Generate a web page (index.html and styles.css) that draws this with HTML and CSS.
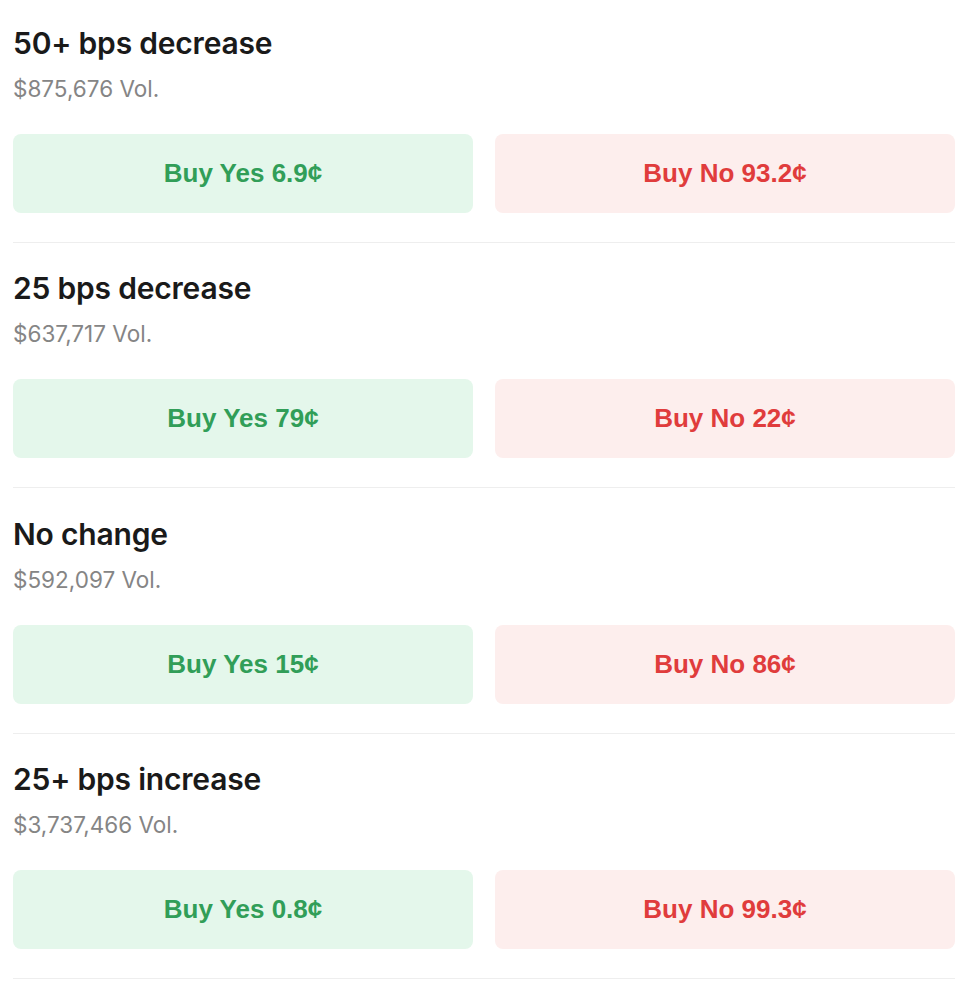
FILE: index.html
```html
<!DOCTYPE html>
<html>
<head>
<meta charset="utf-8">
<link rel="stylesheet" href="styles.css">
</head>
<body>
<div class="list">
  <div class="market">
    <div class="title">50+ bps decrease</div>
    <div class="vol">$875,676 Vol.</div>
    <div class="actions">
      <button class="btn yes">Buy Yes 6.9¢</button>
      <button class="btn no">Buy No 93.2¢</button>
    </div>
  </div>
  <div class="market">
    <div class="title">25 bps decrease</div>
    <div class="vol">$637,717 Vol.</div>
    <div class="actions">
      <button class="btn yes">Buy Yes 79¢</button>
      <button class="btn no">Buy No 22¢</button>
    </div>
  </div>
  <div class="market">
    <div class="title">No change</div>
    <div class="vol">$592,097 Vol.</div>
    <div class="actions">
      <button class="btn yes">Buy Yes 15¢</button>
      <button class="btn no">Buy No 86¢</button>
    </div>
  </div>
  <div class="market">
    <div class="title">25+ bps increase</div>
    <div class="vol">$3,737,466 Vol.</div>
    <div class="actions">
      <button class="btn yes">Buy Yes 0.8¢</button>
      <button class="btn no">Buy No 99.3¢</button>
    </div>
  </div>
</div>
</body>
</html>
```
FILE: styles.css
```css
html, body {
  margin: 0;
  padding: 0;
  background: #ffffff;
}
body {
  font-family: Inter, "Noto Sans", sans-serif;
  -webkit-font-smoothing: antialiased;
}
.list {
  width: 942px;
  margin-left: 13px;
  margin-top: -3px;
}
.market {
  padding-top: 27.5px;
  padding-bottom: 29px;
  border-bottom: 1px solid #eeeeee;
}
.title {
  font-size: 30px;
  line-height: 36px;
  font-weight: 600;
  color: #1a1a1a;
  letter-spacing: -0.2px;
}
.vol {
  margin-top: 15px;
  font-size: 22.5px;
  line-height: 26px;
  color: #858585;
}
.actions {
  margin-top: 32px;
  display: grid;
  grid-template-columns: 1fr 1fr;
  gap: 22px;
}
.btn {
  height: 79px;
  border: none;
  border-radius: 8px;
  font-family: "Liberation Sans", Arial, sans-serif;
  font-size: 26px;
  font-weight: 700;
  cursor: pointer;
}
.yes {
  background: #e4f7eb;
  color: #319e58;
}
.no {
  background: #fdeeed;
  color: #e03c3c;
}
```
